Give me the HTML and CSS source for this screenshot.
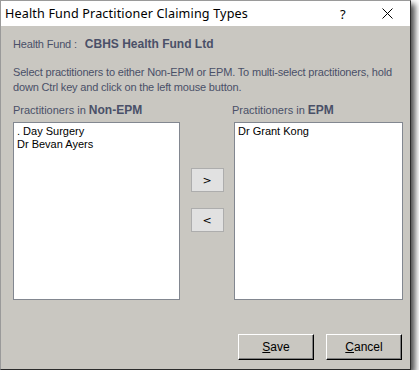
FILE: index.html
```html
<!DOCTYPE html>
<html lang="en">
<head>
  <meta charset="UTF-8" />
  <title>Health Fund Practitioner Claiming Types</title>
  <link rel="stylesheet" href="styles.css">
</head>
<body>
  <div class="window">
    <div class="titlebar">
      <span class="title">Health Fund Practitioner Claiming Types</span>
      <span class="help">?</span>
      <svg class="close" width="11" height="11" viewBox="0 0 11 11">
        <path d="M0.5 0.5 L10.5 10.5 M10.5 0.5 L0.5 10.5" stroke="#000" stroke-width="1" fill="none" />
      </svg>
    </div>

    <div class="content">
      <div class="fund">Health Fund :<b>CBHS Health Fund Ltd</b></div>

      <p class="hint">Select practitioners to either Non-EPM or EPM. To multi-select practitioners, hold down Ctrl key and click on the left mouse button.</p>

      <div class="lists">
        <div class="col">
          <div class="caption">Practitioners in <b>Non-EPM</b></div>
          <div class="listbox">
            <div class="item">. Day Surgery</div>
            <div class="item">Dr Bevan Ayers</div>
          </div>
        </div>
        <div class="movers">
          <button class="move">&gt;</button>
          <button class="move">&lt;</button>
        </div>
        <div class="col">
          <div class="caption">Practitioners in <b>EPM</b></div>
          <div class="listbox">
            <div class="item">Dr Grant Kong</div>
          </div>
        </div>
      </div>

      <div class="footer">
        <button class="classic"><u>S</u>ave</button>
        <button class="classic"><u>C</u>ancel</button>
      </div>
    </div>
  </div>
</body>
</html>
```

FILE: styles.css
```css
body {
  margin: 0;
  background: #ffffff;
  font-family: "Liberation Sans", Arial, sans-serif;
  font-size: 11px;
}
.window {
  width: 409px;
  height: 368px;
  border: 1px solid #2b2b2b;
  border-top-color: #9a9a9a;
  border-left-color: #9a9a9a;
  background: #c9c7c1;
  box-shadow: 4px 4px 6px rgba(0, 0, 0, 0.7);
}
.titlebar {
  height: 25px;
  background: #ffffff;
  display: flex;
  align-items: center;
  padding-left: 4px;
  font-family: "Noto Sans", "Open Sans", sans-serif;
  font-size: 12.6px;
  color: #000;
}
.title {
  flex: 1;
  letter-spacing: 0.15px;
}
.help {
  width: 42px;
  font-size: 13px;
}
.close {
  margin-right: 17px;
}
.content {
  padding: 12px 7px 0 12px;
  color: #4a5068;
  letter-spacing: -0.17px;
}
.fund {
  line-height: 13px;
}
.fund b {
  margin-left: 8px;
  font-size: 12px;
  letter-spacing: 0;
}
.hint {
  margin: 14px 0 0 0;
  line-height: 15px;
}
.lists {
  display: grid;
  grid-template-columns: 167px 1fr 169px;
  margin-top: 9px;
}
.caption {
  line-height: 13px;
  height: 18px;
  letter-spacing: 0;
}
.caption b {
  font-size: 12px;
}
.col:last-child .caption {
  margin-left: -2px;
}
.listbox {
  height: 172px;
  background: #ffffff;
  border: 1px solid #828790;
  padding: 2px 3px;
  color: #000;
  letter-spacing: 0;
}
.item {
  line-height: 13px;
}
.movers {
  display: flex;
  flex-direction: column;
  align-items: center;
  gap: 16px;
  padding-top: 64px;
}
.move {
  width: 33px;
  height: 24px;
  padding: 0;
  background: #e1e1e1;
  border: 1px solid #adadad;
  font-family: "DejaVu Sans", sans-serif;
  font-size: 11px;
  color: #000;
}
.footer {
  display: flex;
  justify-content: flex-end;
  gap: 12px;
  margin-top: 34px;
  padding-right: 1px;
}
.classic {
  width: 76px;
  height: 26px;
  padding: 0;
  background: #c9c7c1;
  border: 1px solid;
  border-color: #ffffff #000000 #000000 #ffffff;
  box-shadow: inset -1px -1px #808080;
  font-family: "Liberation Sans", Arial, sans-serif;
  font-size: 12px;
  color: #000;
}
```
